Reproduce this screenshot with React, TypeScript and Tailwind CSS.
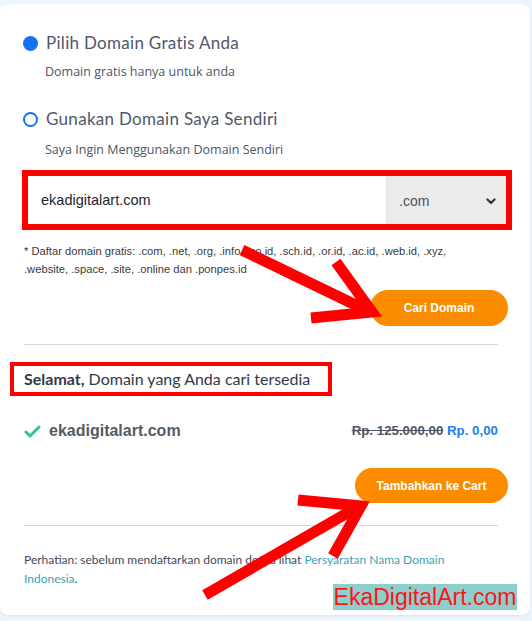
import React from "react";

export default function App() {
  return (
    <div className="relative min-h-screen bg-[#edf4fb] pt-[4px] pr-[2px] font-['Lato',sans-serif]">
      <div className="rounded-lg bg-white pl-[24px] pr-[22px] pt-[27px] pb-[27px] shadow-[0_1px_3px_rgba(0,0,0,0.08)]">
        {/* pilihan domain */}
        <div className="flex items-center gap-[8px] -ml-[1px]">
          <span className="h-[15px] w-[15px] rounded-full bg-[#1273f5]" />
          <span className="text-[17px] leading-[24px] text-[#4f586a] tracking-[0.3px]">Pilih Domain Gratis Anda</span>
        </div>
        <p className="mt-[9px] pl-[21px] font-['Open_Sans',sans-serif] text-[12.5px] leading-[16px] text-[#4c5566]">Domain gratis hanya untuk anda</p>

        <div className="mt-[27px] flex items-center gap-[8px] -ml-[1px]">
          <span className="h-[15px] w-[15px] rounded-full border-2 border-[#1273f5] bg-white" />
          <span className="text-[17px] leading-[24px] text-[#4f586a] tracking-[0.3px]">Gunakan Domain Saya Sendiri</span>
        </div>
        <p className="mt-[11px] pl-[21px] font-['Open_Sans',sans-serif] text-[12.5px] leading-[16px] text-[#4c5566]">Saya Ingin Menggunakan Domain Sendiri</p>

        {/* input domain */}
        <div className="mt-[12px] -ml-[2px] flex h-[60px] w-[490px] border-[6px] border-[#ff0000] bg-white font-['Liberation_Sans',Arial,sans-serif]">
          <div className="flex flex-1 items-center pl-[13px] pt-[2px] text-[14.5px] text-[#23262f]">ekadigitalart.com</div>
          <div className="flex w-[120px] items-center justify-between border-l border-[#e2e2e2] bg-[#ebebeb] pl-[12px] pr-[10px] pt-[2px] text-[14px] text-[#4a5366]">
            <span>.com</span>
            <svg width="10" height="7" viewBox="0 0 10 7" fill="none" stroke="#333" strokeWidth="2.2" strokeLinecap="round" strokeLinejoin="round">
              <path d="M1.5 1.5 5 5 8.5 1.5" />
            </svg>
          </div>
        </div>

        <p className="mt-[12px] max-w-[450px] font-['Liberation_Sans',Arial,sans-serif] text-[11.2px] leading-[18px] text-[#3a3a3a]">
          * Daftar domain gratis: .com, .net, .org, .info, .co.id, .sch.id, .or.id, .ac.id, .web.id, .xyz, .website, .space, .site, .online dan .ponpes.id
        </p>

        <div className="mt-[12px] flex justify-end">
          <button className="h-[36px] w-[138px] rounded-full bg-[#fb8c00] font-['Liberation_Sans',Arial,sans-serif] text-[12px] font-bold text-white">
            Cari Domain
          </button>
        </div>

        <div className="mt-[18px] mr-[10px] h-px bg-[#d6d8dc]" />

        {/* hasil */}
        <div className="mt-[17px] -ml-[14px] flex h-[34px] w-[322px] items-center border-[4px] border-[#ff0000] pl-[10px] text-[16px] text-[#333845]">
          <span className="font-bold">Selamat,</span>&nbsp;Domain yang Anda cari tersedia
        </div>

        <div className="mt-[23px] mr-[10px] flex h-[24px] items-center justify-between font-['Liberation_Sans',Arial,sans-serif]">
          <div className="flex items-center gap-[8px]">
            <svg width="17" height="13" viewBox="0 0 17 13" fill="none" stroke="#35c48a" strokeWidth="3" strokeLinecap="round" strokeLinejoin="round">
              <path d="M2 7 6 11 15 2" />
            </svg>
            <span className="text-[16px] font-bold text-[#555b63]">ekadigitalart.com</span>
          </div>
          <div className="text-[13.3px] font-bold">
            <span className="text-[#4e5563] line-through">Rp. 125.000,00</span>{" "}
            <span className="text-[#1a7ff0]">Rp. 0,00</span>
          </div>
        </div>

        <div className="mt-[25px] flex justify-end">
          <button className="h-[35px] w-[153px] rounded-full bg-[#fb8c00] font-['Liberation_Sans',Arial,sans-serif] text-[12px] font-bold text-white">
            Tambahkan ke Cart
          </button>
        </div>

        <div className="mt-[22px] mr-[10px] h-px bg-[#d6d8dc]" />

        <p className="mt-[24px] max-w-[440px] text-[12px] leading-[19px] text-[#3f4757]">
          Perhatian: sebelum mendaftarkan domain dot id lihat{" "}
          <span className="text-[#3aa3b5]">Persyaratan Nama Domain Indonesia</span>.
        </p>
      </div>

      {/* panah anotasi */}
      <svg className="pointer-events-none absolute left-0 top-0" width="532" height="621" viewBox="0 0 532 621" fill="none" stroke="#ff0000" strokeWidth="11" strokeLinecap="butt" strokeLinejoin="miter">
        <path d="M242 250 L368 311" />
        <path d="M336 262 L372 312 L311 318" />
        <path d="M205 595 L356 508" />
        <path d="M298 500 L361 506 L333 556" />
      </svg>

      {/* watermark */}
      <div className="absolute left-[333px] top-[584px] flex h-[26px] w-[184px] items-center justify-center bg-[#8ecfcd] font-['Liberation_Sans',Arial,sans-serif] text-[23px] leading-none text-[#ff1414]">
        EkaDigitalArt.com
      </div>
    </div>
  );
}
